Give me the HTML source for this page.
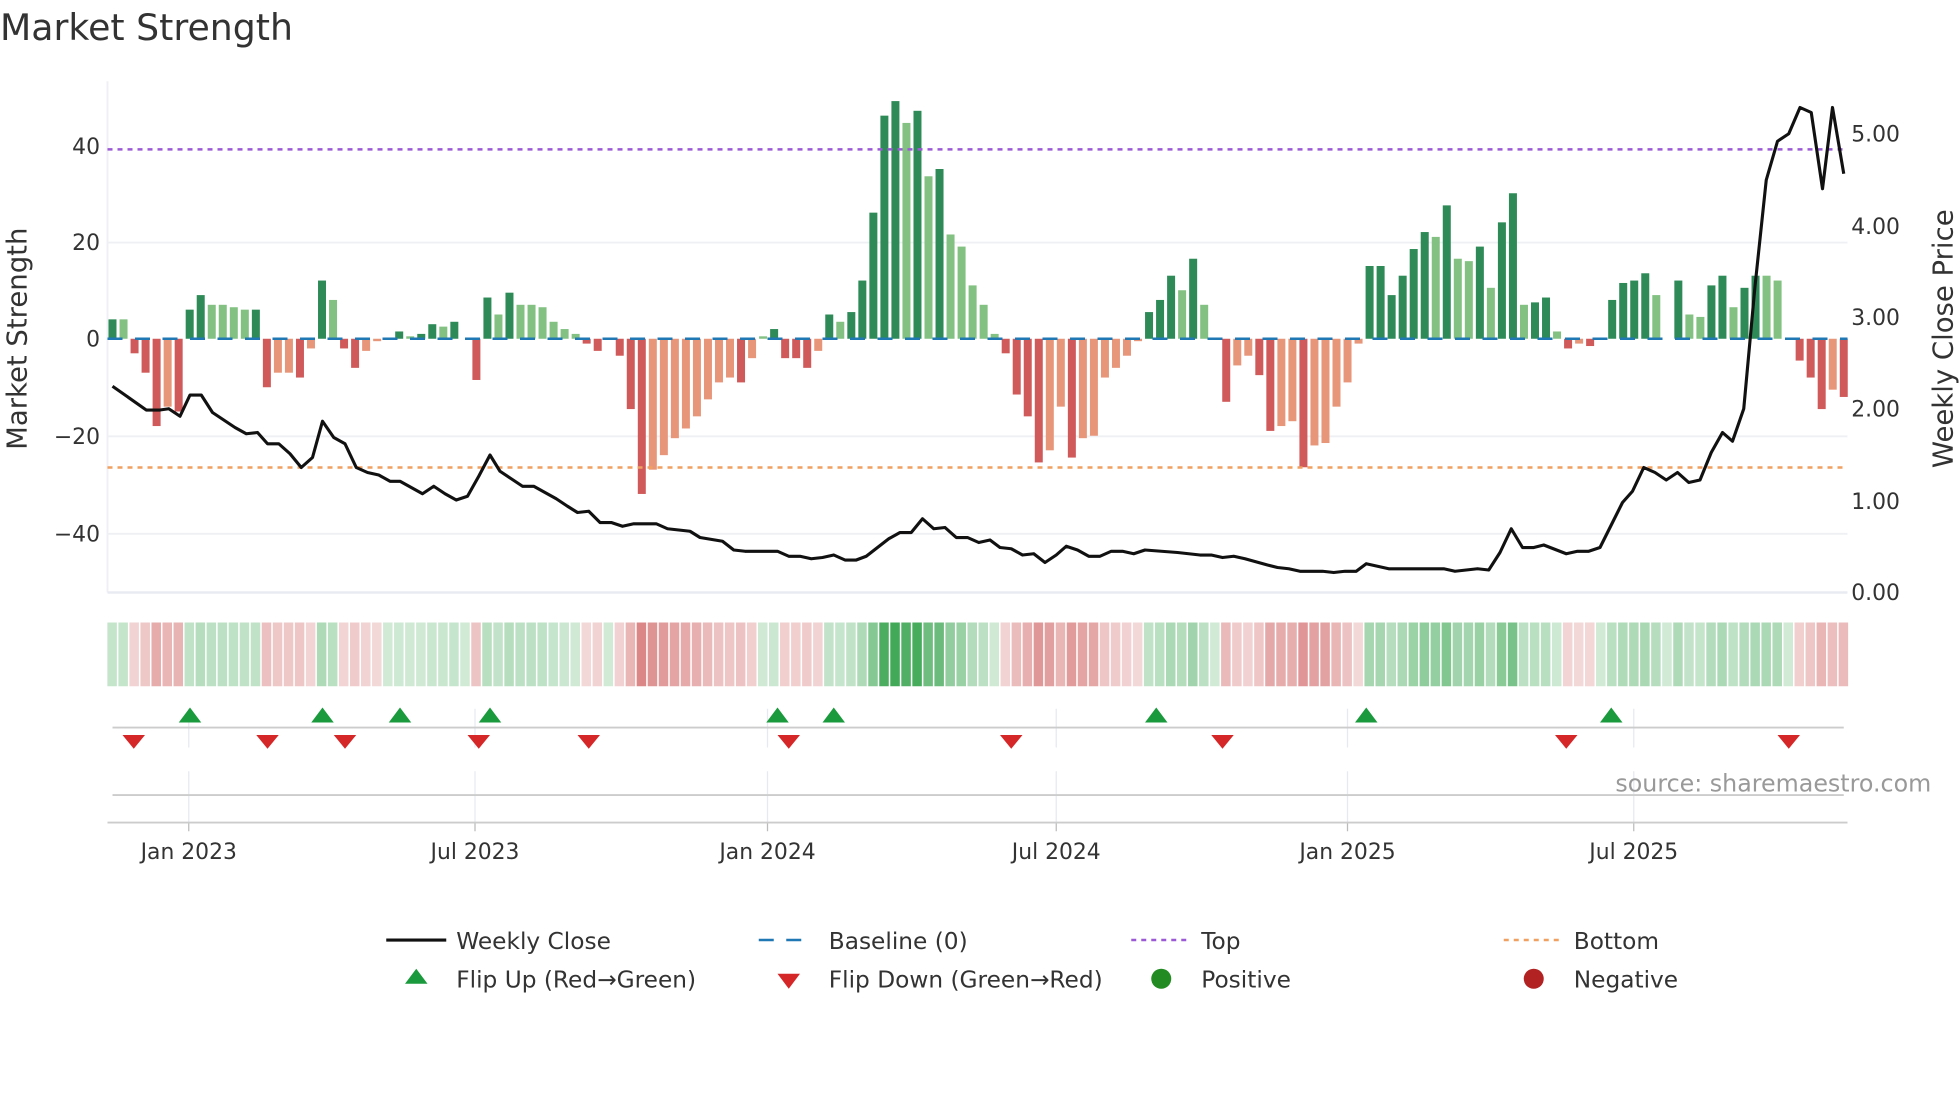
<!DOCTYPE html>
<html><head><meta charset="utf-8">
<style>
html,body{margin:0;padding:0;background:#fff;width:1960px;height:1102px;overflow:hidden}
svg{display:block}
text{font-family:"DejaVu Sans","Liberation Sans",sans-serif;fill:#333}
</style></head>
<body>
<svg id="s" width="1960" height="1102" viewBox="0 0 1568 881.6" xmlns="http://www.w3.org/2000/svg">
<text x="0" y="32" font-size="29">Market Strength</text>
<g id="grid"></g>
<line x1="86" y1="65" x2="86" y2="474" stroke="#eef0f4" stroke-width="1.5"/>
<line x1="86" y1="474" x2="1478" y2="474" stroke="#e8ebf2" stroke-width="2"/>
<g font-size="17.5" text-anchor="end">
<text x="80" y="123">40</text><text x="80" y="200">20</text><text x="80" y="277">0</text>
<text x="80" y="355">−20</text><text x="80" y="433">−40</text>
</g>
<g font-size="17.5" text-anchor="start">
<text x="1481" y="113">5.00</text><text x="1481" y="187">4.00</text><text x="1481" y="260">3.00</text>
<text x="1481" y="333">2.00</text><text x="1481" y="407">1.00</text><text x="1481" y="480">0.00</text>
</g>
<text transform="translate(21,271) rotate(-90)" font-size="22" text-anchor="middle">Market Strength</text>
<text transform="translate(1562,271) rotate(-90)" font-size="22" text-anchor="middle">Weekly Close Price</text>
<g id="bars"></g>
<line x1="86" y1="271" x2="1478" y2="271" stroke="#1f77b4" stroke-width="2" stroke-dasharray="12,10"/>
<line x1="86" y1="119.5" x2="1478" y2="119.5" stroke="#9b59d6" stroke-width="2" stroke-dasharray="4,4"/>
<line x1="86" y1="374" x2="1478" y2="374" stroke="#f0a060" stroke-width="2" stroke-dasharray="4,4"/>
<polyline id="price" fill="none" stroke="#111" stroke-width="2.5" stroke-linejoin="round"/>
<g id="heat"></g>
<g id="vgrid" stroke="#e6e9f0" stroke-width="1"></g>
<line x1="90" y1="582" x2="1475" y2="582" stroke="#ccc" stroke-width="1.5"/>
<line x1="90" y1="636" x2="1475" y2="636" stroke="#ccc" stroke-width="1.5"/>
<line x1="86" y1="658" x2="1478" y2="658" stroke="#ccc" stroke-width="1.5"/>
<g id="flips"></g>
<text x="1545" y="633" font-size="19" text-anchor="end" style="fill:#999">source: sharemaestro.com</text>
<g font-size="17.5" text-anchor="middle" id="xl">
<text x="151" y="687">Jan 2023</text><text x="380" y="687">Jul 2023</text><text x="614" y="687">Jan 2024</text>
<text x="845" y="687">Jul 2024</text><text x="1078" y="687">Jan 2025</text><text x="1307" y="687">Jul 2025</text>
</g>
<g font-size="18.6">
<line x1="309" y1="752" x2="357" y2="752" stroke="#111" stroke-width="2.5"/><text x="365" y="759">Weekly Close</text>
<line x1="607" y1="752" x2="651" y2="752" stroke="#1f77b4" stroke-width="2" stroke-dasharray="12,10"/><text x="663" y="759">Baseline (0)</text>
<line x1="905" y1="752" x2="949" y2="752" stroke="#9b59d6" stroke-width="2" stroke-dasharray="4,4"/><text x="961" y="759">Top</text>
<line x1="1203" y1="752" x2="1247" y2="752" stroke="#f0a060" stroke-width="2" stroke-dasharray="4,4"/><text x="1259" y="759">Bottom</text>
<polygon points="324,787 333,775 342,787" fill="#1a9a3c"/><text x="365" y="790">Flip Up (Red→Green)</text>
<polygon points="622,779 631,791 640,779" fill="#d62728"/><text x="663" y="790">Flip Down (Green→Red)</text>
<circle cx="929" cy="783" r="8" fill="#228b22"/><text x="961" y="790">Positive</text>
<circle cx="1227" cy="783" r="8" fill="#b22222"/><text x="1259" y="790">Negative</text>
</g>
</svg>
<script>
var NS="http://www.w3.org/2000/svg";
function el(t,a,p){var e=document.createElementNS(NS,t);for(var k in a)e.setAttribute(k,a[k]);document.getElementById(p).appendChild(e);return e;}
[194,349,427].forEach(function(y){el("line",{x1:86,y1:y,x2:1478,y2:y,stroke:"#eef0f4","stroke-width":1.5},"grid");});
[151,380,614,845,1078,1307].forEach(function(x){el("line",{x1:x,y1:567,x2:x,y2:598},"vgrid");el("line",{x1:x,y1:617,x2:x,y2:658},"vgrid");el("line",{x1:x,y1:658,x2:x,y2:665,stroke:"#bbb"},"vgrid");});
var B="4d 4l -3r -7r -18r -14o -15r 6d 9d 7l 7l 6.5l 6l 6d -10r -7o -7o -8r -2o 12d 8l -2r -6r -2.5o -0.5o 0 1.5d 0.5l 1d 3d 2.5l 3.5d 0 -8.5r 8.5d 5l 9.5d 7l 7l 6.5l 3.5l 2l 1l -1r -2.5r 0 -3.5r -14.5r -32r -27o -24o -20.5o -18.5o -16o -12.5o -9o -8o -9r -4o 0.5l 2d -4r -4r -6r -2.5o 5d 3.5l 5.5d 12d 26d 46d 49d 44.5l 47d 33.5l 35d 21.5l 19l 11l 7l 1l -3r -11.5r -16r -25.5r -23o -14o -24.5r -20.5o -20o -8o -6o -3.5o -0.5o 5.5d 8d 13d 10l 16.5d 7l 0 -13r -5.5o -3.5o -7.5r -19r -18o -17o -26.5r -22o -21.5o -14o -9o -1o 15d 15d 9d 13d 18.5d 22d 21l 27.5d 16.5l 16l 19d 10.5l 24d 30d 7l 7.5d 8.5d 1.5l -2r -1o -1.5r 0 8d 11.5d 12d 13.5d 9l 0 12d 5l 4.5l 11d 13d 6.5l 10.5d 13d 13l 12l 0 -4.5r -8r -14.5r -10.5o -12r".split(" ");
var col={d:"#2e8b57",l:"#82c182",r:"#d05a5a",o:"#e8967a"};
var n=B.length, step=(1475-90)/(n-1);
B.forEach(function(s,i){
  var v=parseFloat(s), t=s.slice(-1), x=90+i*step;
  if(v!==0&&col[t]){var y=271-3.88*v;el("rect",{x:x-3.2,y:Math.min(y,271),width:6.4,height:Math.abs(y-271),fill:col[t]},"bars");}
  var f;
  if(v>=0){var a=0.22+Math.min(1,v/50)*0.7;f="rgba(46,160,70,"+a.toFixed(2)+")";}
  else{var a=0.2+Math.min(1,-v/32)*0.45;f="rgba(200,70,70,"+a.toFixed(2)+")";}
  el("rect",{x:x-4.1,y:498,width:7.6,height:51,fill:f},"heat");
});
var P=[[90,309],[100,316],[117,328],[128,328],[135,327],[144,333],[152,316],[161,316],[170,330],[188,342],[197,347],[206,346],[214,355],[223,355],[232,363],[241,374],[250,366],[258,337],[267,350],[276,355],[285,374],[294,378],[303,380],[312,385],[320,385],[329,390],[338,395],[347,389],[356,395],[365,400],[374,397],[383,381],[392,364],[400,377],[409,383],[418,389],[427,389],[436,394],[445,399],[454,405],[462,410],[471,409],[480,418],[489,418],[498,421],[507,419],[525,419],[534,423],[552,425],[560,430],[578,433],[587,440],[596,441],[622,441],[631,445],[640,445],[649,447],[658,446],[667,444],[676,448],[685,448],[693,445],[702,438],[711,431],[720,426],[729,426],[738,415],[747,423],[756,422],[765,430],[774,430],[783,434],[792,432],[800,438],[809,439],[818,444],[827,443],[836,450],[845,444],[853,437],[862,440],[871,445],[880,445],[889,441],[898,441],[907,443],[916,440],[942,442],[960,444],[969,444],[978,446],[987,445],[996,447],[1014,452],[1022,454],[1031,455],[1040,457],[1058,457],[1067,458],[1076,457],[1085,457],[1093,451],[1111,455],[1155,455],[1164,457],[1182,455],[1191,456],[1200,442],[1209,423],[1218,438],[1227,438],[1235,436],[1253,443],[1262,441],[1271,441],[1280,438],[1289,420],[1298,402],[1306,393],[1315,374],[1324,378],[1333,384],[1342,378],[1351,386],[1360,384],[1369,362],[1378,346],[1386,353],[1395,327],[1404,229],[1413,144],[1422,113],[1431,107],[1440,86],[1449,90],[1458,151],[1466,86],[1475,139]];
document.getElementById("price").setAttribute("points",P.map(function(p){return p.join(",")}).join(" "));
[152,258,320,392,622,667,925,1093,1289].forEach(function(x){el("polygon",{points:(x-9)+",578 "+x+",566 "+(x+9)+",578",fill:"#1a9a3c"},"flips");});
[107,214,276,383,471,631,809,978,1253,1431].forEach(function(x){el("polygon",{points:(x-9)+",588 "+x+",599 "+(x+9)+",588",fill:"#d62728"},"flips");});
</script>
</body></html>
